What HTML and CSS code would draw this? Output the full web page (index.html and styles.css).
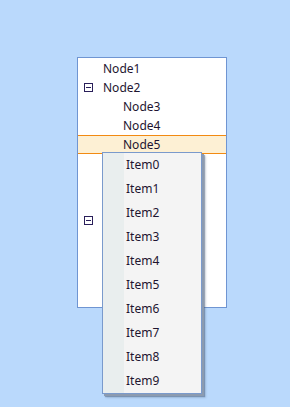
FILE: index.html
```html
<!DOCTYPE html>
<html lang="en">
<head>
    <meta charset="utf-8">
    <link rel="stylesheet" href="styles.css">
</head>
<body>
    <div class="stage">
        <div class="tree">
            <div class="node"><span class="toggle"></span><span class="label">Node1</span></div>
            <div class="node"><span class="toggle minus"></span><span class="label">Node2</span></div>
            <div class="node child"><span class="toggle"></span><span class="label">Node3</span></div>
            <div class="node child"><span class="toggle"></span><span class="label">Node4</span></div>
            <div class="node child selected"><span class="toggle"></span><span class="label">Node5</span></div>
            <div class="node"></div>
            <div class="node"></div>
            <div class="node"></div>
            <div class="node"><span class="toggle minus"></span></div>
        </div>

        <!-- context menu opened under Node5 -->
        <div class="menu">
            <div class="menu-item">Item0</div>
            <div class="menu-item">Item1</div>
            <div class="menu-item">Item2</div>
            <div class="menu-item">Item3</div>
            <div class="menu-item">Item4</div>
            <div class="menu-item">Item5</div>
            <div class="menu-item">Item6</div>
            <div class="menu-item">Item7</div>
            <div class="menu-item">Item8</div>
            <div class="menu-item">Item9</div>
        </div>
    </div>
</body>
</html>
```
FILE: styles.css
```css
body {
    margin: 0;
    padding: 0;
    background-color: #bad9fc;
    font-family: "Noto Sans", "Open Sans", sans-serif;
    font-size: 12px;
    color: #1e1530;
    min-height: 407px;
}
.stage {
    position: relative;
    padding: 57px 0 0 77px;
}
.tree {
    width: 148px;
    height: 248px;
    padding-top: 1px;
    box-sizing: content-box;
    background: white;
    border: 1px solid #6f95d2;
}
.node {
    display: flex;
    align-items: center;
    height: 19px;
    padding-left: 6px;
    box-sizing: border-box;
}
.node.child {
    padding-left: 26px;
}
.node.selected {
    background-color: #fdf0d4;
    border-top: 1px solid #f28a12;
    border-bottom: 1px solid #f28a12;
}
.toggle {
    width: 9px;
    height: 9px;
    margin-right: 10px;
    flex: none;
    box-sizing: border-box;
    position: relative;
}
.toggle.minus {
    border: 1px solid #2a1f5a;
}
.toggle.minus::after {
    content: "";
    position: absolute;
    left: 1px;
    right: 1px;
    top: 3px;
    height: 1px;
    background: #2a1f5a;
}
.label {
    line-height: 19px;
    white-space: nowrap;
}
.menu {
    position: absolute;
    left: 102px;
    top: 152px;
    width: 98px;
    background: linear-gradient(to right, #e9eeee 0, #e9eeee 21px, #f4f4f4 21px);
    border: 1px solid #7a9acc;
    box-shadow: 2px 2px 0 #8c9bb0, 3px 3px 1px rgba(70, 90, 120, 0.45), 4px 4px 2px rgba(70, 90, 120, 0.2);
}
.menu-item {
    height: 24px;
    line-height: 24px;
    padding-left: 23px;
    white-space: nowrap;
}
```
